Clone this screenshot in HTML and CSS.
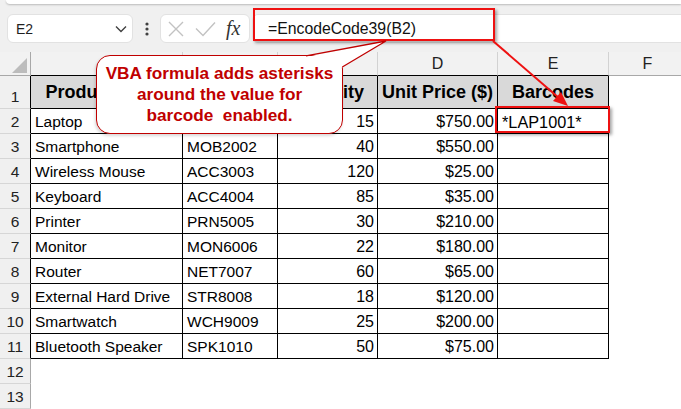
FILE: index.html
```html
<!DOCTYPE html>
<html>
<head>
<meta charset="utf-8">
<link rel="stylesheet" href="styles.css">
</head>
<body>
<div class="topstrip"></div>
<div class="fbar">
  <div class="namebox"><span>E2</span>
    <svg class="chev" width="12" height="8" viewBox="0 0 12 8"><polyline points="1,1.5 6,6.5 11,1.5" fill="none" stroke="#404040" stroke-width="1.4"/></svg>
  </div>
  <div class="dots">
    <svg width="4" height="14" viewBox="0 0 4 14"><circle cx="2" cy="2" r="1.6" fill="#404040"/><circle cx="2" cy="7" r="1.6" fill="#404040"/><circle cx="2" cy="12" r="1.6" fill="#404040"/></svg>
  </div>
  <div class="fnbox">
    <svg width="16" height="16" viewBox="0 0 16 16"><path d="M1 1 L15 15 M15 1 L1 15" stroke="#c2c2c2" stroke-width="1.4" fill="none"/></svg>
    <svg width="21" height="16" viewBox="0 0 21 16"><polyline points="1,7.5 8,14.5 20,1.5" stroke="#c2c2c2" stroke-width="1.4" fill="none"/></svg>
    <span class="fx">fx</span>
  </div>
  <div class="finput">=EncodeCode39(B2)</div>
</div>

<div class="sheet">
  <div class="corner"><span class="tri"></span></div>
  <div class="ch in"></div>
  <div class="ch in"></div>
  <div class="ch in"></div>
  <div class="ch in">D</div>
  <div class="ch in">E</div>
  <div class="ch">F</div>

  <div class="rh in">1</div>
  <div class="c h">Product Name</div>
  <div class="c h"></div>
  <div class="c h">Quantity</div>
  <div class="c h">Unit Price ($)</div>
  <div class="c h">Barcodes</div>
  <div class="e"></div>

  <div class="rh in">2</div><div class="c t">Laptop</div><div class="c t"></div><div class="c n">15</div><div class="c n">$750.00</div><div class="c b">*LAP1001*</div><div class="e"></div>
  <div class="rh in">3</div><div class="c t">Smartphone</div><div class="c t">MOB2002</div><div class="c n">40</div><div class="c n">$550.00</div><div class="c"></div><div class="e"></div>
  <div class="rh in">4</div><div class="c t">Wireless Mouse</div><div class="c t">ACC3003</div><div class="c n">120</div><div class="c n">$25.00</div><div class="c"></div><div class="e"></div>
  <div class="rh in">5</div><div class="c t">Keyboard</div><div class="c t">ACC4004</div><div class="c n">85</div><div class="c n">$35.00</div><div class="c"></div><div class="e"></div>
  <div class="rh in">6</div><div class="c t">Printer</div><div class="c t">PRN5005</div><div class="c n">30</div><div class="c n">$210.00</div><div class="c"></div><div class="e"></div>
  <div class="rh in">7</div><div class="c t">Monitor</div><div class="c t">MON6006</div><div class="c n">22</div><div class="c n">$180.00</div><div class="c"></div><div class="e"></div>
  <div class="rh in">8</div><div class="c t">Router</div><div class="c t">NET7007</div><div class="c n">60</div><div class="c n">$65.00</div><div class="c"></div><div class="e"></div>
  <div class="rh in">9</div><div class="c t">External Hard Drive</div><div class="c t">STR8008</div><div class="c n">18</div><div class="c n">$120.00</div><div class="c"></div><div class="e"></div>
  <div class="rh in">10</div><div class="c t">Smartwatch</div><div class="c t">WCH9009</div><div class="c n">25</div><div class="c n">$200.00</div><div class="c"></div><div class="e"></div>
  <div class="rh in">11</div><div class="c t">Bluetooth Speaker</div><div class="c t">SPK1010</div><div class="c n">50</div><div class="c n">$75.00</div><div class="c"></div><div class="e"></div>
  <div class="rh">12</div><div class="e"></div><div class="e"></div><div class="e"></div><div class="e"></div><div class="e"></div><div class="e"></div>
  <div class="rh">13</div><div class="e"></div><div class="e"></div><div class="e"></div><div class="e"></div><div class="e"></div><div class="e"></div>
</div>

<div class="hl hl-formula"></div>
<div class="hl hl-cell"></div>

<div class="callout">VBA formula adds asterisks<br>around the value for<br>barcode&nbsp; enabled.</div>

<svg class="overlay" width="681" height="409" viewBox="0 0 681 409">
  <polygon points="306,57 386,41 341,68" fill="#fff"/>
  <polyline points="306,55.8 386,41 342.3,67" fill="none" stroke="#c00000" stroke-width="1.3" stroke-linejoin="miter"/>
  <line x1="493" y1="41" x2="559" y2="98" stroke="#ee1111" stroke-width="2"/>
  <polygon points="568,106 553,101 561,92" fill="#ee1111"/>
</svg>
</body>
</html>
```

FILE: styles.css
```css
* { box-sizing: border-box; }
html, body { margin: 0; padding: 0; }
body {
  width: 681px;
  height: 409px;
  overflow: hidden;
  position: relative;
  background: #f0f0f0;
  font-family: "Liberation Sans", Arial, sans-serif;
  color: #000;
}

.topstrip {
  height: 4px;
  margin-left: 6px;
  background: #fff;
  border-bottom-left-radius: 6px;
  box-shadow: 0 1px 2px rgba(0, 0, 0, 0.22);
}

.fbar {
  display: flex;
  align-items: center;
  height: 29px;
  margin-top: 10px;
  padding-left: 7px;
}

.namebox {
  width: 126px;
  height: 29px;
  background: #fff;
  border: 1px solid #e2e2e2;
  border-radius: 6px;
  display: flex;
  align-items: center;
  justify-content: space-between;
  padding: 0 5px 0 8px;
  font-size: 14px;
  color: #1f1f1f;
}

.dots {
  width: 27px;
  display: flex;
  justify-content: center;
  align-items: center;
}

.fnbox {
  width: 90px;
  height: 29px;
  background: #fff;
  border: 1px solid #e2e2e2;
  border-radius: 6px;
  display: flex;
  align-items: center;
  padding-left: 7px;
  gap: 11px;
}

.fx {
  font-family: "Liberation Serif", "Times New Roman", serif;
  font-style: italic;
  font-size: 20px;
  color: #333;
  margin-left: -1px;
}

.finput {
  flex: 1;
  height: 29px;
  margin-left: 2px;
  background: #fff;
  border: 1px solid #e2e2e2;
  border-right: none;
  border-radius: 6px 0 0 6px;
  padding-left: 15px;
  font-size: 15.8px;
  color: #111;
  display: flex;
  align-items: center;
}

.sheet {
  margin-top: 9px;
  display: grid;
  grid-template-columns: 31px 152px 95px 100px 120px 111px 78px;
  grid-template-rows: 24px 33px repeat(12, 25px);
  background: #fff;
}

.corner {
  background: #f2f2f2;
  border-right: 1px solid #a8a8a8;
  border-bottom: 1px solid #a8a8a8;
  display: flex;
  align-items: flex-end;
  justify-content: flex-end;
  padding: 0 3px 2px 0;
}
.tri {
  width: 0;
  height: 0;
  border-left: 15px solid transparent;
  border-bottom: 15px solid #bcbcbc;
}

.ch {
  background: #f2f2f2;
  border-right: 1px solid #d2d2d2;
  border-bottom: 1px solid #a8a8a8;
  display: flex;
  align-items: center;
  justify-content: center;
  font-size: 16px;
  color: #222;
}
.ch.in { border-bottom-color: #000; }

.rh {
  background: #f0f0f0;
  border-right: 1px solid #a8a8a8;
  border-bottom: 1px solid #d6d6d6;
  display: flex;
  align-items: flex-end;
  justify-content: center;
  padding-bottom: 3px;
  font-size: 15.5px;
  line-height: 16px;
  color: #222;
}
.rh.in { border-right-color: #000; }

.c {
  border-right: 1px solid #000;
  border-bottom: 1px solid #000;
  display: flex;
  align-items: flex-end;
  padding: 0 4px 3px 4px;
  line-height: 16px;
  white-space: nowrap;
  overflow: hidden;
}
.c.t { font-size: 15.5px; }
.c.n { font-size: 16px; justify-content: flex-end; padding-right: 3px; }
.c.b { font-size: 16.3px; }
.c.h {
  background: #d9d9d9;
  font-weight: bold;
  font-size: 18px;
  align-items: center;
  justify-content: center;
  padding: 0;
}

.e { background: #fff; }

.hl {
  position: absolute;
  border: 2px solid #ee1111;
  box-shadow: 2px 2px 3px rgba(0, 0, 0, 0.35);
}
.hl-formula { left: 253px; top: 8px; width: 242px; height: 33px; }
.hl-cell { left: 495px; top: 106px; width: 115px; height: 27px; }

.callout {
  position: absolute;
  left: 96px;
  top: 55px;
  width: 247px;
  height: 79px;
  background: #fff;
  border: 1.5px solid #c00000;
  border-radius: 14px;
  box-shadow: -1px 2px 3px rgba(0, 0, 0, 0.15);
  padding-top: 7px;
  text-align: center;
  font-weight: bold;
  font-size: 17.2px;
  line-height: 21px;
  color: #c00000;
}

.overlay {
  position: absolute;
  left: 0;
  top: 0;
  pointer-events: none;
}
```
